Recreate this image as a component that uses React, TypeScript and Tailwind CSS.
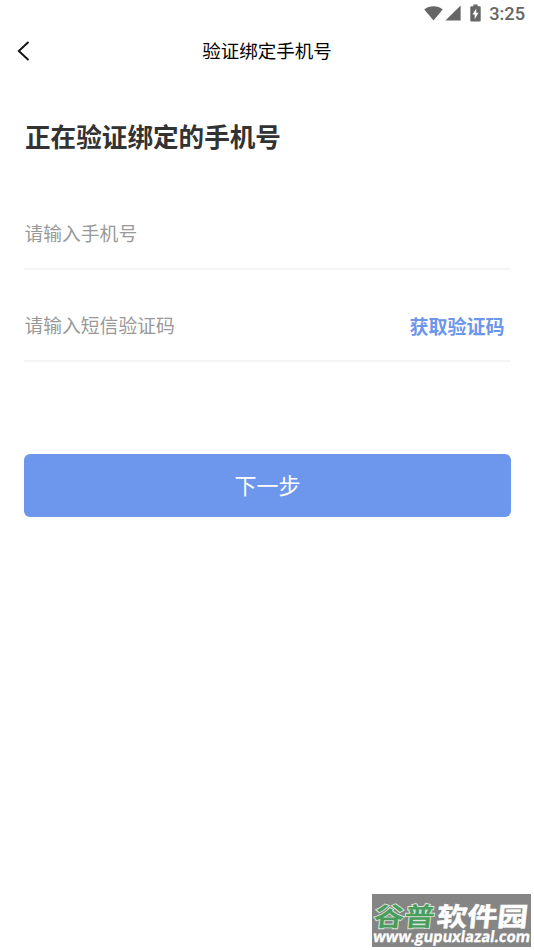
import React, { useState } from 'react';

type FieldProps = {
    type: string;
    placeholder: string;
    value: string;
    onChange: (value: string) => void;
    children?: React.ReactNode;
};

const StatusBar: React.FC = () => (
    <div className="flex h-[27px] items-center justify-end pr-[9px] text-[#666666]">
        <svg className="-mt-px mr-[2px] h-[16px] w-[19px]" viewBox="0 0 20 16" fill="currentColor" aria-hidden="true">
            <path d="M0.3 4.2C3 2.1 6.3 1 10 1s7 1.1 9.7 3.2L10 15.8z" />
        </svg>
        <svg className="-mt-px mr-[9px] h-[16px] w-[16px]" viewBox="0 0 16 16" fill="currentColor" aria-hidden="true">
            <path d="M15.6 0.4v15.2H0.4z" />
        </svg>
        <svg className="-mt-[2px] mr-[8px] h-[18px] w-[11px]" viewBox="0 0 11 18" fill="currentColor" aria-hidden="true">
            <path
                fillRule="evenodd"
                d="M3.4 0.5h4.2v1.7h2.1q1 0 1 1v13.2q0 1-1 1H1.3q-1 0-1-1V3.2q0-1 1-1h2.1zM6.2 4.6L2.5 10.6h2.2v4.6l3.8-6.4H6.2z"
            />
        </svg>
        <span className="pt-px font-[Roboto] text-[18.2px] leading-[26px] font-medium">3:25</span>
    </div>
);

const Field: React.FC<FieldProps> = ({ type, placeholder, value, onChange, children }) => (
    <div className="flex h-[74px] items-center border-b-2 border-[#f5f5f5]">
        <input
            type={type}
            value={value}
            placeholder={placeholder}
            onChange={(e) => onChange(e.target.value)}
            className="h-full min-w-0 flex-1 pt-px pl-[0.5px] text-[18.8px] text-[#333333] placeholder-[#999999] outline-none"
        />
        {children}
    </div>
);

const Watermark: React.FC = () => (
    <div className="absolute top-[894px] left-[372px] flex h-[53px] w-[159px] flex-col bg-[#858585] text-white">
        <svg className="block h-full w-full overflow-visible" viewBox="0 0 159 53">
            <g transform="translate(1 31.5) skewX(-6) scale(1 0.85)" fontFamily="'Noto Sans CJK SC', sans-serif" fontSize="30.5" fontWeight="700">
                <text x="0" y="0" textLength="61" fill="#4a9c5d" stroke="#dce8de" strokeWidth="2" paintOrder="stroke">谷普</text>
                <text x="63" y="0" textLength="91" fill="#ffffff" stroke="#ffffff" strokeWidth="0.6">软件园</text>
            </g>
            <g transform="translate(0.5 47.5) skewX(-8)">
                <text x="0" y="0" textLength="157" lengthAdjust="spacingAndGlyphs" fill="#ffffff" stroke="#ffffff" strokeWidth="0.3" fontFamily="'Open Sans', sans-serif" fontSize="15.5" fontWeight="700">
                    www.gupuxlazal.com
                </text>
            </g>
        </svg>
    </div>
);

const App: React.FC = () => {
    const [phone, setPhone] = useState('');
    const [code, setCode] = useState('');

    return (
        <div className="relative flex h-[950px] w-[534px] flex-col bg-white font-['Noto_Sans_CJK_SC',sans-serif]">
            <StatusBar />
            <header className="grid h-[48px] grid-cols-[60px_1fr_60px] items-center">
                <button type="button" aria-label="返回" className="pl-[17px]">
                    <svg className="h-[20px] w-[13px]" viewBox="0 0 13 20" fill="none" stroke="#111111" strokeWidth="1.9">
                        <path d="M11.5 1L1.8 10l9.7 9" />
                    </svg>
                </button>
                <h1 className="pb-[3px] text-center text-[18.5px] leading-[44px] text-black">验证绑定手机号</h1>
            </header>
            <main className="flex flex-col pr-[23px] pl-[24px]">
                <h2 className="mt-[42px] pl-px text-[25.6px] leading-[38px] font-bold text-[#333333]">正在验证绑定的手机号</h2>
                <div className="mt-[41px] flex flex-col gap-[18px]">
                    <Field type="tel" placeholder="请输入手机号" value={phone} onChange={setPhone} />
                    <Field type="text" placeholder="请输入短信验证码" value={code} onChange={setCode}>
                        <button type="button" className="pt-[4px] pr-[6.5px] text-[19px] font-bold text-[#6b96ec]">获取验证码</button>
                    </Field>
                </div>
                <button type="button" className="mt-[92px] h-[63px] rounded-[6px] bg-[#6c97ec] pb-[2px] text-[22px] text-white">
                    下一步
                </button>
            </main>
            <Watermark />
        </div>
    );
};

export default App;
